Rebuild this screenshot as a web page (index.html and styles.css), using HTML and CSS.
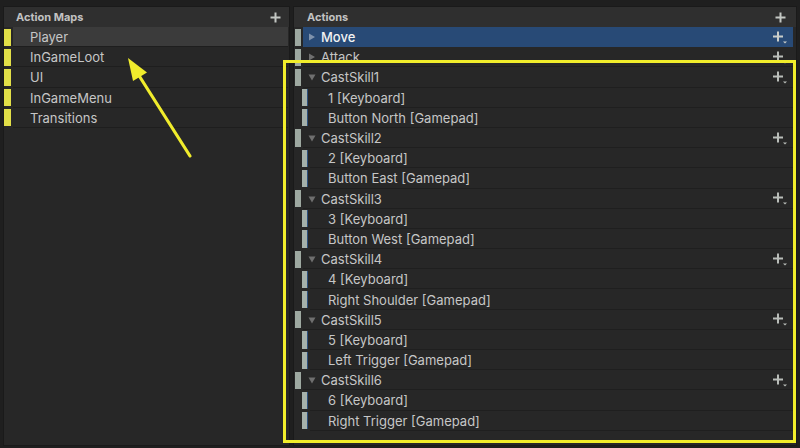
FILE: index.html
```html
<!DOCTYPE html>
<html>
<head>
<meta charset="utf-8">
<link rel="stylesheet" href="styles.css">
</head>
<body>
<div class="app">
  <section class="panel maps">
    <header class="panel-head">
      <span>Action Maps</span>
      <svg class="plus" width="11" height="11" viewBox="0 0 11 11"><path d="M5.5 0.5v10M0.5 5.5h10" stroke="#c3c7c3" stroke-width="2"/></svg>
    </header>
    <ul class="list">
      <li class="map selected"><i class="stripe yellow"></i><span class="cell">Player</span></li>
      <li class="map"><i class="stripe yellow"></i><span class="cell">InGameLoot</span></li>
      <li class="map"><i class="stripe yellow"></i><span class="cell">UI</span></li>
      <li class="map"><i class="stripe yellow"></i><span class="cell">InGameMenu</span></li>
      <li class="map"><i class="stripe yellow"></i><span class="cell">Transitions</span></li>
    </ul>
  </section>

  <section class="panel actions">
    <header class="panel-head head-actions">
      <span>Actions</span>
      <svg class="plus" width="11" height="11" viewBox="0 0 11 11"><path d="M5.5 0.5v10M0.5 5.5h10" stroke="#c3c7c3" stroke-width="2"/></svg>
    </header>
    <div class="tree">
      <div class="row action selected"><i class="stripe grey"></i><span class="cell"><svg class="tri" width="8" height="8" viewBox="0 0 8 8"><path d="M1 0.5L7 4L1 7.5Z" fill="#7f93ad"/></svg><span class="label">Move</span><svg class="padd" width="14" height="13" viewBox="0 0 14 13"><path d="M5 0.5v10M0 5.5h10" stroke="#c9cdc9" stroke-width="2"/><path d="M10 10.5h4l-2 2Z" fill="#c9cdc9"/></svg></span></div>
      <div class="row action"><i class="stripe grey"></i><span class="cell"><svg class="tri" width="8" height="8" viewBox="0 0 8 8"><path d="M1 0.5L7 4L1 7.5Z" fill="#6f6f6f"/></svg><span class="label">Attack</span><svg class="padd" width="14" height="13" viewBox="0 0 14 13"><path d="M5 0.5v10M0 5.5h10" stroke="#b9bdb9" stroke-width="2"/><path d="M10 10.5h4l-2 2Z" fill="#b9bdb9"/></svg></span></div>

      <div class="row action"><i class="stripe grey"></i><span class="cell"><svg class="tri" width="8" height="8" viewBox="0 0 8 8"><path d="M0.5 1.5L7.5 1.5L4 7.5Z" fill="#6f6f6f"/></svg><span class="label">CastSkill1</span><svg class="padd" width="14" height="13" viewBox="0 0 14 13"><path d="M5 0.5v10M0 5.5h10" stroke="#b9bdb9" stroke-width="2"/><path d="M10 10.5h4l-2 2Z" fill="#b9bdb9"/></svg></span></div>
      <div class="row binding"><i class="stripe light"></i><span class="cell">1 [Keyboard]</span></div>
      <div class="row binding"><i class="stripe light"></i><span class="cell">Button North [Gamepad]</span></div>

      <div class="row action"><i class="stripe grey"></i><span class="cell"><svg class="tri" width="8" height="8" viewBox="0 0 8 8"><path d="M0.5 1.5L7.5 1.5L4 7.5Z" fill="#6f6f6f"/></svg><span class="label">CastSkill2</span><svg class="padd" width="14" height="13" viewBox="0 0 14 13"><path d="M5 0.5v10M0 5.5h10" stroke="#b9bdb9" stroke-width="2"/><path d="M10 10.5h4l-2 2Z" fill="#b9bdb9"/></svg></span></div>
      <div class="row binding"><i class="stripe light"></i><span class="cell">2 [Keyboard]</span></div>
      <div class="row binding"><i class="stripe light"></i><span class="cell">Button East [Gamepad]</span></div>

      <div class="row action"><i class="stripe grey"></i><span class="cell"><svg class="tri" width="8" height="8" viewBox="0 0 8 8"><path d="M0.5 1.5L7.5 1.5L4 7.5Z" fill="#6f6f6f"/></svg><span class="label">CastSkill3</span><svg class="padd" width="14" height="13" viewBox="0 0 14 13"><path d="M5 0.5v10M0 5.5h10" stroke="#b9bdb9" stroke-width="2"/><path d="M10 10.5h4l-2 2Z" fill="#b9bdb9"/></svg></span></div>
      <div class="row binding"><i class="stripe light"></i><span class="cell">3 [Keyboard]</span></div>
      <div class="row binding"><i class="stripe light"></i><span class="cell">Button West [Gamepad]</span></div>

      <div class="row action"><i class="stripe grey"></i><span class="cell"><svg class="tri" width="8" height="8" viewBox="0 0 8 8"><path d="M0.5 1.5L7.5 1.5L4 7.5Z" fill="#6f6f6f"/></svg><span class="label">CastSkill4</span><svg class="padd" width="14" height="13" viewBox="0 0 14 13"><path d="M5 0.5v10M0 5.5h10" stroke="#b9bdb9" stroke-width="2"/><path d="M10 10.5h4l-2 2Z" fill="#b9bdb9"/></svg></span></div>
      <div class="row binding"><i class="stripe light"></i><span class="cell">4 [Keyboard]</span></div>
      <div class="row binding"><i class="stripe light"></i><span class="cell">Right Shoulder [Gamepad]</span></div>

      <div class="row action"><i class="stripe grey"></i><span class="cell"><svg class="tri" width="8" height="8" viewBox="0 0 8 8"><path d="M0.5 1.5L7.5 1.5L4 7.5Z" fill="#6f6f6f"/></svg><span class="label">CastSkill5</span><svg class="padd" width="14" height="13" viewBox="0 0 14 13"><path d="M5 0.5v10M0 5.5h10" stroke="#b9bdb9" stroke-width="2"/><path d="M10 10.5h4l-2 2Z" fill="#b9bdb9"/></svg></span></div>
      <div class="row binding"><i class="stripe light"></i><span class="cell">5 [Keyboard]</span></div>
      <div class="row binding"><i class="stripe light"></i><span class="cell">Left Trigger [Gamepad]</span></div>

      <div class="row action"><i class="stripe grey"></i><span class="cell"><svg class="tri" width="8" height="8" viewBox="0 0 8 8"><path d="M0.5 1.5L7.5 1.5L4 7.5Z" fill="#6f6f6f"/></svg><span class="label">CastSkill6</span><svg class="padd" width="14" height="13" viewBox="0 0 14 13"><path d="M5 0.5v10M0 5.5h10" stroke="#b9bdb9" stroke-width="2"/><path d="M10 10.5h4l-2 2Z" fill="#b9bdb9"/></svg></span></div>
      <div class="row binding"><i class="stripe light"></i><span class="cell">6 [Keyboard]</span></div>
      <div class="row binding"><i class="stripe light"></i><span class="cell">Right Trigger [Gamepad]</span></div>
    </div>
  </section>

  <div class="highlight"></div>
  <svg class="arrow" width="800" height="448" viewBox="0 0 800 448">
    <line x1="190" y1="156" x2="138" y2="74" stroke="#f0ec2c" stroke-width="3.2" stroke-linecap="round"/>
    <path d="M128 58L147 72.5L133 81Z" fill="#f0ec2c"/>
  </svg>
</div>
</body>
</html>
```

FILE: styles.css
```css
* { box-sizing: border-box; }

html, body {
  margin: 0;
  padding: 0;
}

body {
  width: 800px;
  height: 448px;
  overflow: hidden;
  background: #1f1f1f;
  font-family: Inter, "Noto Sans", "Liberation Sans", sans-serif;
  color: #c6c6c6;
}

.app {
  position: relative;
  display: flex;
  gap: 3px;
  height: 448px;
  padding: 6px 3px 2px 3px;
}

.panel {
  display: flex;
  flex-direction: column;
  background: #272727;
  border: 1px solid #1a1a1a;
}

.maps { width: 287px; }
.actions { flex: 1; }

.panel-head {
  height: 20px;
  flex: none;
  display: flex;
  align-items: center;
  justify-content: space-between;
  padding: 0 8px 0 12px;
  background: #2f2f2f;
  font-size: 11px;
  font-weight: 700;
  color: #c2c2c2;
}

.head-actions { padding: 0 10px 0 13px; }

.plus { display: block; }

.list {
  list-style: none;
  margin: 0;
  padding: 0;
}

.map {
  height: 20.2px;
  display: flex;
  align-items: stretch;
}

.stripe {
  display: block;
  flex: none;
  margin: 1.5px 0;
}

.stripe.yellow {
  width: 7px;
  background: #e2df48;
}

.map .cell {
  flex: 1;
  display: flex;
  align-items: center;
  margin-left: 2px;
  padding-left: 17px;
  padding-top: 1px;
  font-size: 13px;
  border-bottom: 1px solid #1e1e1e;
  margin-right: 1px;
}

.map.selected .cell {
  background: #3b3b3b;
}

.tree {
  display: flex;
  flex-direction: column;
}

.row {
  height: 20.2px;
  display: flex;
  align-items: stretch;
}

.row .cell {
  flex: 1;
  display: flex;
  align-items: center;
  font-size: 13px;
  padding-top: 1px;
  border-bottom: 1px solid #1f1f1f;
  margin-right: 3px;
}

.action .stripe.grey {
  width: 6px;
  margin-left: 1px;
  background: #9ea9a1;
}

.action .cell {
  margin-left: 2px;
  padding-left: 5px;
  padding-right: 6px;
}

.action .tri {
  flex: none;
  margin-right: 5px;
}

.action .label {
  flex: 1;
}

.padd {
  flex: none;
  display: block;
}

.action.selected .cell {
  background: #284a76;
  color: #f2f2f2;
  font-weight: 500;
  border-bottom-color: #284a76;
}

.binding .stripe.light {
  width: 6px;
  margin-left: 8px;
  background: #a5b1ab;
  border-right: 1px solid #2c4f7c;
}

.binding .cell {
  margin-left: 2px;
  padding-left: 18px;
}

.highlight {
  position: absolute;
  left: 283px;
  top: 60px;
  width: 513px;
  height: 383px;
  border: 3px solid #f1ed2b;
  pointer-events: none;
}

.arrow {
  position: absolute;
  left: 0;
  top: 0;
  pointer-events: none;
}
```
